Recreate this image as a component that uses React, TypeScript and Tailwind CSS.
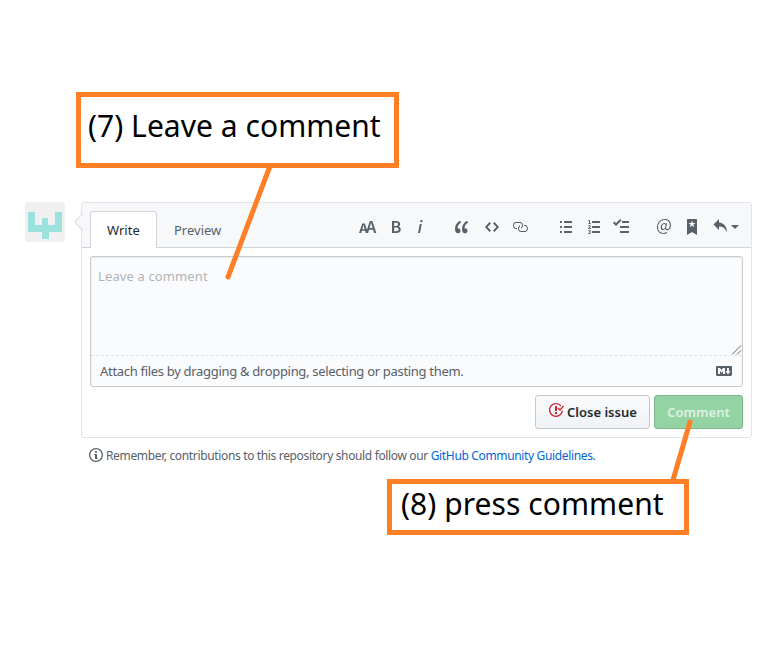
import type { ReactNode } from "react";

type IconProps = { w: number; d: string; className?: string };

function Icon({ w, d, className = "" }: IconProps) {
  return (
    <svg width={w} height={16} viewBox={`0 0 ${w} 16`} fill="currentColor" fillRule="evenodd" className={`shrink-0 ${className}`}>
      <path d={d} />
    </svg>
  );
}

const paths = {
  size: "M13.62 9.08L12.1 3.66h-.06l-1.5 5.42h3.08zM5.7 10.13S4.68 6.52 4.53 6.02h-.08l-1.13 4.11H5.7zM17.31 14h-2.25l-.95-3.25h-4.07L9.09 14H6.84l-.69-2.33H2.87L2.17 14H0l3.3-9.59h2.5l2.17 6.34L10.86 2h2.52l3.94 12h-.01z",
  bold: "M1 2h3.83c2.48 0 4.3.75 4.3 2.95 0 1.14-.63 2.23-1.67 2.61v.06c1.33.3 2.3 1.23 2.3 2.86 0 2.39-1.97 3.52-4.61 3.52H1V2zm3.66 4.95c1.67 0 2.38-.66 2.38-1.69 0-1.17-.78-1.61-2.34-1.61H3.13v3.3h1.53zm.27 5.39c1.77 0 2.75-.64 2.75-1.98 0-1.27-.95-1.81-2.75-1.81h-1.8v3.8h1.8v-.01z",
  italic: "M2.81 5h1.98L3 14H1l1.81-9zm.36-2.7c0-.7.58-1.3 1.33-1.3.56 0 1.13.38 1.13 1.03 0 .75-.59 1.3-1.33 1.3-.58 0-1.13-.38-1.13-1.03z",
  quote: "M6.16 3.5C3.73 5.06 2.55 6.67 2.55 9.36c.16-.05.3-.05.44-.05 1.27 0 2.5.86 2.5 2.41 0 1.61-1.03 2.61-2.5 2.61-1.9 0-2.99-1.52-2.99-4.25 0-3.8 1.75-6.53 5.02-8.42L6.16 3.5zm7 0c-2.43 1.56-3.61 3.17-3.61 5.86.16-.05.3-.05.44-.05 1.27 0 2.5.86 2.5 2.41 0 1.61-1.03 2.61-2.5 2.61-1.89 0-2.98-1.52-2.98-4.25 0-3.8 1.75-6.53 5.02-8.42l1.14 1.84h-.01z",
  code: "M9.5 3L8 4.5 11.5 8 8 11.5 9.5 13 14 8 9.5 3zm-5 0L0 8l4.5 5L6 11.5 2.5 8 6 4.5 4.5 3z",
  link: "M4 9h1v1H4c-1.5 0-3-1.69-3-3.5S2.55 3 4 3h4c1.45 0 3 1.69 3 3.5 0 1.41-.91 2.72-2 3.25V8.59c.58-.45 1-1.27 1-2.09C10 5.22 8.98 4 8 4H4c-.98 0-2 1.22-2 2.5S3 9 4 9zm9-3h-1v1h1c1 0 2 1.22 2 2.5S13.98 12 13 12H9c-.98 0-2-1.22-2-2.5 0-.83.42-1.64 1-2.09V6.25c-1.09.53-2 1.84-2 3.25C6 11.31 7.55 13 9 13h4c1.45 0 3-1.69 3-3.5S14.5 6 13 6z",
  bullets: "M2 13c0 .59 0 1-.59 1H.59C0 14 0 13.59 0 13c0-.59 0-1 .59-1h.81c.59 0 .59.41.59 1H2zm2.59-9h6.81c.59 0 .59-.41.59-1 0-.59 0-1-.59-1H4.59C4 2 4 2.41 4 3c0 .59 0 1 .59 1zM1.41 7H.59C0 7 0 7.41 0 8c0 .59 0 1 .59 1h.81c.59 0 .59-.41.59-1 0-.59 0-1-.59-1h.01zm0-5H.59C0 2 0 2.41 0 3c0 .59 0 1 .59 1h.81c.59 0 .59-.41.59-1 0-.59 0-1-.59-1h.01zm10 5H4.59C4 7 4 7.41 4 8c0 .59 0 1 .59 1h6.81c.59 0 .59-.41.59-1 0-.59 0-1-.59-1h.01zm0 5H4.59C4 12 4 12.41 4 13c0 .59 0 1 .59 1h6.81c.59 0 .59-.41.59-1 0-.59 0-1-.59-1h.01z",
  numbers: "M12.01 13c0 .59 0 1-.59 1H4.6c-.59 0-.59-.41-.59-1 0-.59 0-1 .59-1h6.81c.59 0 .59.41.59 1h.01zM4.6 4h6.81c.59 0 .59-.41.59-1 0-.59 0-1-.59-1H4.6c-.59 0-.59.41-.59 1 0 .59 0 1 .59 1zm6.81 3H4.6c-.59 0-.59.41-.59 1 0 .59 0 1 .59 1h6.81c.59 0 .59-.41.59-1 0-.59 0-1-.59-1zM2 1h-.72c-.3.19-.58.25-1.03.34V2H1v2.14H.16V5H3v-.86H2V1zm.25 8.13c-.17 0-.45.03-.66.06.53-.56 1.14-1.25 1.14-1.89C2.72 6.52 2.17 6 1.38 6c-.59 0-.97.2-1.38.64l.58.58c.19-.19.38-.38.64-.38.28 0 .48.16.48.52 0 .53-.77 1.2-1.7 2.06V10h3l-.09-.88h-.66v.01zm-.08 3.78v-.03c.44-.19.64-.47.64-.86 0-.7-.56-1.11-1.44-1.11-.48 0-.89.19-1.28.52l.55.64c.25-.2.44-.31.69-.31.27 0 .42.13.42.36 0 .27-.2.44-.86.44v.75c.83 0 .98.17.98.47 0 .25-.23.38-.58.38-.28 0-.56-.14-.81-.38l-.48.66c.3.36.77.56 1.41.56.83 0 1.53-.41 1.53-1.16 0-.5-.31-.81-.77-.94v.01z",
  tasks: "M15.41 9H7.59C7 9 7 8.59 7 8c0-.59 0-1 .59-1h7.81c.59 0 .59.41.59 1 0 .59 0 1-.59 1h.01zM9.59 4C9 4 9 3.59 9 3c0-.59 0-1 .59-1h5.81c.59 0 .59.41.59 1 0 .59 0 1-.59 1H9.59zM0 3.91l1.41-1.3L3 4.2 7.09 0 8.5 1.41 3 6.91l-3-3zM7.59 12h7.81c.59 0 .59.41.59 1 0 .59 0 1-.59 1H7.59C7 14 7 13.59 7 13c0-.59 0-1 .59-1z",
  mention: "M6.58 15c1.25 0 2.52-.31 3.56-.94l-.42-.94c-.84.52-1.89.83-3.03.83-3.23 0-5.64-2.08-5.64-5.72 0-4.37 3.23-7.18 6.58-7.18 3.45 0 5.22 2.19 5.22 5.2 0 2.39-1.34 3.86-2.5 3.86-1.05 0-1.36-.73-1.05-2.19l.73-3.75H8.98l-.11.72c-.41-.63-.94-.83-1.56-.83-2.19 0-3.66 2.39-3.66 4.38 0 1.67.94 2.61 2.3 2.61.84 0 1.67-.53 2.3-1.25.11.94.94 1.45 1.98 1.45 1.67 0 3.77-1.67 3.77-5C14 2.61 11.59 0 7.83 0 3.66 0 0 3.33 0 8.33 0 12.71 2.92 15 6.58 15zm-.31-5c-.73 0-1.36-.52-1.36-1.67 0-1.45.94-3.22 2.41-3.22.52 0 .84.2 1.25.83l-.52 3.02c-.63.73-1.25 1.05-1.78 1.05V10z",
  bookmark: "M9 0H1C.27 0 0 .27 0 1v15l5-3.09L10 16V1c0-.73-.27-1-1-1zm-.78 4.25L6.36 5.61l.72 2.16c.06.22-.02.28-.2.17L5 6.6 3.12 7.94c-.19.11-.25.05-.2-.17l.72-2.16-1.86-1.36c-.17-.16-.14-.23.09-.23l2.3-.03.7-2.16h.25l.7 2.16 2.3.03c.23 0 .27.08.09.23h.01z",
  reply: "M6 3.5c3.92.44 8 3.125 8 10-2.312-5.062-4.75-6-8-6V11L.5 5.5 6 0v3.5z",
  closed: "M7 10h2v2H7v-2zm2-6H7v5h2V4zm1.5 1.5l-1 1L12 9l4-4.5-1-1L12 7l-1.5-1.5zM8 13.7A5.71 5.71 0 0 1 2.3 8c0-3.14 2.56-5.7 5.7-5.7 1.83 0 3.45.88 4.5 2.2l.92-.92A6.947 6.947 0 0 0 8 1C4.14 1 1 4.14 1 8s3.14 7 7 7 7-3.14 7-7l-1.52 1.52c-.66 2.41-2.86 4.19-5.48 4.19v-.01z",
  info: "M6.3 5.69a.942.942 0 0 1-.28-.7c0-.28.09-.52.28-.7.19-.18.42-.28.7-.28.28 0 .52.09.7.28.18.19.28.42.28.7 0 .28-.09.52-.28.7a1 1 0 0 1-.7.3c-.28 0-.52-.11-.7-.3zM8 7.99c-.02-.25-.11-.48-.31-.69-.2-.19-.42-.3-.69-.31H6c-.27.02-.48.13-.69.31-.2.2-.3.44-.31.69h1v3c.02.27.11.5.31.69.2.2.42.31.69.31h1c.27 0 .48-.11.69-.31.2-.19.3-.42.31-.69H8V7.98v.01zM7 2.3c-3.14 0-5.7 2.54-5.7 5.68 0 3.14 2.56 5.7 5.7 5.7s5.7-2.55 5.7-5.7c0-3.15-2.56-5.69-5.7-5.69v.01zM7 .98c3.86 0 7 3.14 7 7s-3.14 7-7 7-7-3.12-7-7 3.14-7 7-7z",
  markdown: "M14.85 3H1.15C.52 3 0 3.52 0 4.15v7.69C0 12.48.52 13 1.15 13h13.69c.64 0 1.15-.52 1.15-1.15v-7.7C16 3.52 15.48 3 14.85 3zM9 11H7V8L5.5 9.92 4 8v3H2V5h2l1.5 2L7 5h2v6zm2.99.5L9.5 8H11V5h2v3h1.5l-2.51 3.5z",
};

function Avatar() {
  return (
    <svg width="40" height="40" viewBox="0 0 40 40" className="shrink-0 rounded-[3px] bg-[#f0f0f0]" shapeRendering="crispEdges">
      <path fill="#9be1dc" d="M3 10h7v13h7v-7h6v7h7V10h7v20H24v7h-7v-7H3z" />
    </svg>
  );
}

function Toolbar() {
  return (
    <div className="ml-auto mr-3 mt-4 flex h-4 items-center text-[#586069]">
      <Icon w={18} d={paths.size} className="mr-[14px]" />
      <Icon w={10} d={paths.bold} className="mr-4" />
      <Icon w={6} d={paths.italic} className="mr-8" />
      <Icon w={14} d={paths.quote} className="mr-4" />
      <Icon w={14} d={paths.code} className="mr-[13px]" />
      <Icon w={16} d={paths.link} className="mr-8" />
      <Icon w={12} d={paths.bullets} className="mr-4" />
      <Icon w={12} d={paths.numbers} className="mr-[13px]" />
      <Icon w={16} d={paths.tasks} className="mr-7" />
      <Icon w={14} d={paths.mention} className="mr-4" />
      <Icon w={10} d={paths.bookmark} className="mr-4" />
      <Icon w={14} d={paths.reply} className="mr-1" />
      <span className="border-x-4 border-t-4 border-x-transparent border-t-[#586069]" />
    </div>
  );
}

function Callout({ className, children }: { className: string; children: ReactNode }) {
  return (
    <div className={`absolute whitespace-nowrap border-[5px] border-[#ff7f27] bg-white text-black ${className}`}>{children}</div>
  );
}

export default function App() {
  return (
    <main className="relative h-[670px] w-[764px] overflow-hidden bg-white pl-[25px] pt-[202px] font-['Noto_Sans',sans-serif] text-[13px] text-[#586069]">
      <div className="flex items-start">
        <Avatar />
        <section className="relative ml-4 h-[236px] w-[671px] rounded-[3px] border border-[#e1e4e8] bg-white">
          <svg width="9" height="18" viewBox="0 0 9 18" className="absolute -left-2 top-[10px]">
            <path d="M9 0L1 9l8 9" fill="#f6f8fa" stroke="#dfe2e6" strokeWidth="1.2" />
          </svg>
          <header className="flex h-[45px] rounded-t-[2px] border-b border-[#d1d5da] bg-[#f6f8fa] pl-2">
            <nav className="mt-2 flex h-[37px] leading-[36px]">
              <span className="w-[67px] rounded-t-[3px] border border-b-0 border-[#d1d5da] bg-white pl-4 text-[#24292e]">Write</span>
              <span className="pl-[17px] pt-px">Preview</span>
            </nav>
            <Toolbar />
          </header>
          <div className="mx-2 mt-2 h-[131px] rounded-[3px] border border-[#c6cbd1] bg-[#fafbfc] shadow-[inset_0_1px_2px_rgba(27,31,35,0.075)]">
            <div className="flex h-[99px] items-start justify-between border-b border-dashed border-[#dfe2e5] pl-[7px] pt-[10px]">
              <span className="leading-[19px] tracking-[0.12px] text-[#b0b5ba]">Leave a comment</span>
              <svg width="10" height="10" viewBox="0 0 10 10" className="mt-[78px] self-start" stroke="#555" strokeWidth="0.9">
                <path d="M0 9.5L9 0.5M5 9.5L9 5.5" />
              </svg>
            </div>
            <div className="flex h-[30px] items-center justify-between pl-[9px] pr-[10px]">
              <span className="pt-[2px] tracking-[-0.31px]">Attach files by dragging &amp; dropping, selecting or pasting them.</span>
              <Icon w={16} d={paths.markdown} />
            </div>
          </div>
          <div className="mr-2 mt-2 flex justify-end gap-1 font-semibold leading-[32px]">
            <button className="flex h-[34px] w-[115px] rounded-[3px] border border-[#c5c9cd] bg-linear-to-b from-[#fafbfc] to-[#eff3f6] pl-3 text-[#24292e]">
              <Icon w={16} d={paths.closed} className="mr-[3px] mt-[6px] text-[#cb2431]" />
              <span className="whitespace-nowrap">Close issue</span>
            </button>
            <button className="h-[34px] w-[89px] rounded-[3px] border border-[#7fb58c] bg-[#94d3a2] text-[#dff2e4]">Comment</button>
          </div>
        </section>
      </div>
      <p className="ml-16 mt-[9px] flex h-4 items-center whitespace-nowrap text-[12px]">
        <Icon w={14} d={paths.info} className="mr-[3px]" />
        <span className="pt-[2px] tracking-[-0.35px]">
          Remember, contributions to this repository should follow our <a className="text-[#0366d6]">GitHub Community Guidelines</a>.
        </span>
      </p>
      <svg width="764" height="670" viewBox="0 0 764 670" className="pointer-events-none absolute left-0 top-0" stroke="#ff7f27" strokeWidth="5" strokeLinecap="round">
        <path d="M270 166L228 277M690 422L673 480" />
      </svg>
      <Callout className="left-[76px] top-[92px] h-[76px] w-[323px] pl-[7px] text-[30px] leading-[58px] tracking-[0.04px]">(7) Leave a comment</Callout>
      <Callout className="left-[387px] top-[479px] h-[56px] w-[302px] pl-[9px] text-[30px] leading-[40px] tracking-[0.06px]">(8) press comment</Callout>
    </main>
  );
}
